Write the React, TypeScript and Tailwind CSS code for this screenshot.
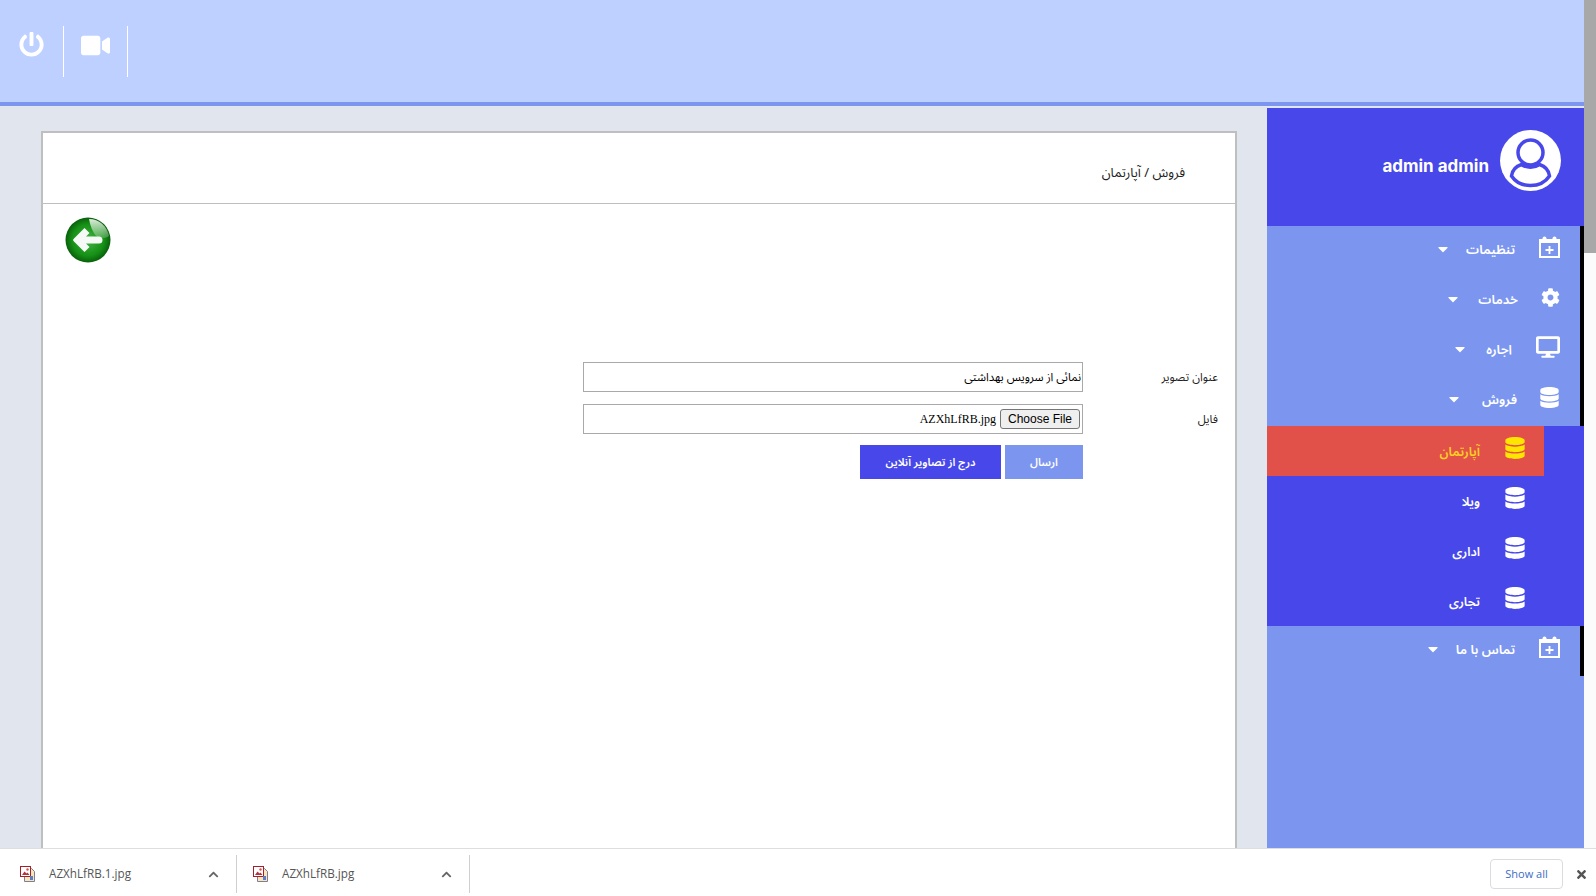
import { FaCaretDown, FaChevronUp, FaCog, FaDatabase, FaDesktop, FaPowerOff, FaTimes, FaVideo } from 'react-icons/fa';
import type { ReactNode } from 'react';

const persian = "font-['Noto_Sans_Arabic','Noto_Sans','DejaVu_Sans',sans-serif]";

function CalendarIcon() {
  return (
    <svg width="21" height="22" viewBox="0 0 21 22" fill="none" className="text-white -mt-[9px]">
      <rect x="1" y="4" width="19" height="17" stroke="currentColor" strokeWidth="2" />
      <path d="M1 4h19v3H1z" fill="currentColor" />
      <rect x="3.5" y="0.5" width="4" height="5" rx="2" fill="currentColor" />
      <rect x="13.5" y="0.5" width="4" height="5" rx="2" fill="currentColor" />
      <path d="M10.5 10v8M6.5 14h8" stroke="currentColor" strokeWidth="1.8" />
    </svg>
  );
}

function Avatar() {
  return (
    <svg width="61" height="61" viewBox="0 0 61 61">
      <circle cx="30.5" cy="30.5" r="30.5" fill="#fff" />
      <circle cx="30.5" cy="22.500" r="12.500" fill="#fff" stroke="#4747ea" strokeWidth="3.500" />
      <path d="M11.500 46c1-7 5-10 10-11.500 5 3.500 13 3.500 18 0 5 1.500 9 4.500 10 11.500-4 6-11 9.500-19 9.500s-15-3.500-19-9.500z" fill="#fff" stroke="#4747ea" strokeWidth="3.500" />
    </svg>
  );
}

function BackIcon() {
  return (
    <svg width="46" height="46" viewBox="0 0 46 46">
      <defs>
        <radialGradient id="ball" cx="50%" cy="50%" r="55%">
          <stop offset="0%" stopColor="#45b545" />
          <stop offset="65%" stopColor="#158f15" />
          <stop offset="100%" stopColor="#044f08" />
        </radialGradient>
        <linearGradient id="shine" x1="0" y1="0" x2="0" y2="1">
          <stop offset="0%" stopColor="#e8f5e8" stopOpacity="0.95" />
          <stop offset="100%" stopColor="#e8f5e8" stopOpacity="0.2" />
        </linearGradient>
      </defs>
      <circle cx="23" cy="23" r="22.500" fill="url(#ball)" />
      <path d="M24 2c10 0 18 7 20 17-4 3-10 3-13 0-3-4-6-10-7-17z" fill="url(#shine)" />
      <path d="M8.500 22l11-11 5 5-3.500 3.500h13a3.500 3.500 0 0 1 0 7h-13l3.500 3.500-5 5-11-11a1.500 1.500 0 0 1 0-2z" fill="#f6faf6" />
    </svg>
  );
}

function FileImageIcon() {
  return (
    <svg width="17" height="17" viewBox="0 0 17 17">
      <path d="M4.500 2.500h7l3 3v10h-10z" fill="#f7e6b8" stroke="#7d7d9a" />
      <rect x="0.500" y="0.500" width="10" height="10" fill="#fff" stroke="#a3202a" />
      <path d="M2 9l2.500-3.500 2 2 1-1L9.500 9z" fill="#b8313c" />
      <circle cx="7.500" cy="3.500" r="1.200" fill="#d9534f" />
      <rect x="10" y="10" width="3" height="4" fill="#5f7fc4" />
    </svg>
  );
}

interface NavItem {
  label: string;
  icon: ReactNode;
  gap: string;
  caretGap: string;
}

const topItems: NavItem[] = [
  { label: 'تنظیمات', icon: <CalendarIcon />, gap: 'mr-[24px]', caretGap: 'mr-[15px]' },
  { label: 'خدمات', icon: <FaCog size={19} className="-mt-[8px]" />, gap: 'mr-[23px]', caretGap: 'mr-[17px]' },
  { label: 'اجاره', icon: <FaDesktop size={24} className="-mt-[9px]" />, gap: 'mr-[24px]', caretGap: 'mr-[18px]' },
  { label: 'فروش', icon: <FaDatabase size={21} className="-mt-[7px]" />, gap: 'mr-[22px]', caretGap: 'mr-[20px]' },
];

const subItems = ['آپارتمان', 'ویلا', 'اداری', 'تجاری'];

function TopNavRow({ item }: { item: NavItem }) {
  return (
    <div className="h-[50px] flex items-center justify-end bg-[#7c96f0] border-r-[4px] border-black pr-[20px] text-white">
      <FaCaretDown size={16} className={`${item.caretGap} -mt-1`} />
      <span className={`text-[13px] font-semibold ${item.gap} ${persian}`} dir="rtl">{item.label}</span>
      {item.icon}
    </div>
  );
}

function Sidebar() {
  return (
    <aside className="w-[317px] shrink-0 flex flex-col bg-[#7c96f0]">
      <div className="h-[118px] shrink-0 bg-[#4747ea] flex items-center justify-end pr-[23px] pb-[14px] text-white">
        <span className="text-[17px] font-bold mr-[11px] mt-[13px] font-['Inter',sans-serif]">admin admin</span>
        <Avatar />
      </div>
      {topItems.map((item) => (
        <TopNavRow key={item.label} item={item} />
      ))}
      <div className="bg-[#4747ea]">
        {subItems.map((label, i) => (
          <div
            key={label}
            className={
              i === 0
                ? 'h-[50px] flex items-center justify-end bg-[#e2504a] mr-[40px] pr-[18px] text-[#ffd21f]'
                : 'h-[50px] flex items-center justify-end pr-[58px] text-white'
            }
          >
            <span className={`text-[12.500px] font-semibold mr-[24px] mt-[3px] ${persian}`} dir="rtl">{label}</span>
            <FaDatabase size={22} className={i === 0 ? 'text-[#ffe600] -mt-[6px]' : '-mt-[6px]'} />
          </div>
        ))}
      </div>
      <div className="h-[50px] flex items-center justify-end border-r-[4px] border-black pr-[20px] text-white">
        <FaCaretDown size={16} className="mr-[15px] -mt-1" />
        <span className={`text-[13px] font-semibold mr-[24px] ${persian}`} dir="rtl">تماس با ما</span>
        <CalendarIcon />
      </div>
    </aside>
  );
}

function UploadForm() {
  return (
    <div className="flex flex-col items-end pr-[17px] mt-[99px] text-[11.500px] text-[#222]">
      <div className="flex items-center">
        <div className={`w-[500px] h-[30px] border border-[#a9a9a9] flex items-center justify-end pr-[1px] pt-[2px] text-[11.500px] text-black ${persian}`}>
          <span dir="rtl">نمائی از سرویس بهداشتی</span>
        </div>
        <span className={`w-[135px] text-right pt-[2px] ${persian}`} dir="rtl">عنوان تصویر</span>
      </div>
      <div className="flex items-center mt-[12px]">
        <div className="w-[500px] h-[30px] border border-[#a9a9a9] flex items-center justify-end pr-[2px]">
          <span className="text-[12px] text-black font-['Liberation_Serif',serif] mr-[4px]">AZXhLfRB.jpg</span>
          <button className="h-[20px] w-[80px] bg-[#efefef] border border-[#767676] rounded-[3px] text-[12px] text-black font-['Liberation_Sans',sans-serif]">Choose File</button>
        </div>
        <span className={`w-[135px] text-right pt-[2px] ${persian}`} dir="rtl">فایل</span>
      </div>
      <div className="flex mt-[11px] mr-[135px] gap-[4px] text-white text-[11px] font-semibold">
        <button className={`w-[141px] h-[34px] pt-[2px] bg-[#4747ea] ${persian}`} dir="rtl">درج از تصاویر آنلاین</button>
        <button className={`w-[78px] h-[34px] pt-[2px] bg-[#7c96f0] ${persian}`} dir="rtl">ارسال</button>
      </div>
    </div>
  );
}

function DownloadItem({ name, box }: { name: string; box: string }) {
  return (
    <div className={`${box} h-[38px] flex items-center border-r border-[#cfcfcf] pr-[17px] shrink-0`}>
      <FileImageIcon />
      <span className="ml-[12px] text-[11.700px] text-[#555] font-['Open_Sans',sans-serif]">{name}</span>
      <FaChevronUp size={11} className="ml-auto text-[#666]" />
    </div>
  );
}

export default function App() {
  return (
    <div className="h-[896px] w-full flex flex-col overflow-hidden bg-white">
      <div className="flex flex-1 min-h-0">
        <div className="flex-1 min-w-0 flex flex-col bg-[#e0e5ee]">
          <header className="h-[106px] shrink-0 bg-[#bdd0ff] border-b-[4px] border-[#7c96f0] flex items-start pt-[26px] text-white">
            <div className="w-[64px] h-[51px] border-r border-white pl-[19px] pt-[6px]">
              <FaPowerOff size={25} />
            </div>
            <div className="w-[64px] h-[51px] border-r border-white pl-[17px] pt-[5px]">
              <FaVideo size={29} />
            </div>
          </header>
          <div className="flex-1 min-h-0 flex overflow-hidden pt-[2px]">
            <main className="flex-1 min-w-0 pl-[41px] pr-[30px] pt-[23px]">
              <div className="h-[800px] bg-white border-2 border-[#bfbfbf]">
                <div className={`h-[71px] border-b border-[#bfbfbf] flex items-center justify-end pr-[50px] pt-[12px] text-[13px] text-[#222] ${persian}`}>
                  <span dir="rtl">فروش / آپارتمان</span>
                </div>
                <div className="pl-[22px] pt-[13px]">
                  <BackIcon />
                </div>
                <UploadForm />
              </div>
            </main>
            <Sidebar />
          </div>
        </div>
        <div className="w-[12px] shrink-0 bg-[#fbfbfb] flex flex-col">
          <div className="h-[253px] bg-[#a8a8a8]" />
        </div>
      </div>
      <footer className="h-[48px] shrink-0 bg-white border-t border-[#dedede] flex items-center pt-[3px]">
        <DownloadItem name="AZXhLfRB.1.jpg" box="w-[237px] pl-[20px]" />
        <DownloadItem name="AZXhLfRB.jpg" box="w-[233px] pl-[16px]" />
        <div className="ml-auto flex items-center">
          <button className="w-[73px] h-[30px] rounded-[4px] border border-[#dadce0] text-[11px] text-[#3b6cc4] font-['Open_Sans',sans-serif]">Show all</button>
          <FaTimes size={13} className="ml-[12px] mr-[8px] text-[#555]" />
        </div>
      </footer>
    </div>
  );
}
